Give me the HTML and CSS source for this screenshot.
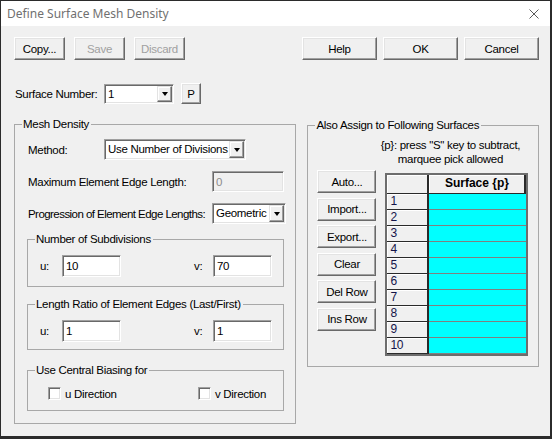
FILE: index.html
```html
<!DOCTYPE html>
<html lang="en">

<head>
    <meta charset="UTF-8">
    <title>Define Surface Mesh Density</title>
    <link rel="stylesheet" href="styles.css">
</head>

<body>
    <div class="window">
        <div class="titlebar">
            <span class="title">Define Surface Mesh Density</span>
            <svg class="close-icon" width="10" height="10" viewBox="0 0 10 10">
                <path d="M0.5 0.5L9.5 9.5M9.5 0.5L0.5 9.5" stroke="#5a5a5a" stroke-width="1" fill="none" />
            </svg>
        </div>

        <div class="dialog">
            <div class="toolbar">
                <div class="btn-group">
                    <button class="btn">Copy...</button>
                    <button class="btn" disabled>Save</button>
                    <button class="btn" disabled>Discard</button>
                </div>
                <div class="btn-group right">
                    <button class="btn wide">Help</button>
                    <button class="btn wide">OK</button>
                    <button class="btn wide">Cancel</button>
                </div>
            </div>

            <div class="surface-row">
                <span class="surface-label">Surface Number:</span>
                <div class="combo surface-combo">
                    <span class="combo-text">1</span>
                    <span class="combo-arrow"></span>
                </div>
                <button class="btn p-btn">P</button>
            </div>

            <div class="panels">
                <!-- Left: mesh density settings -->
                <fieldset class="group mesh">
                    <legend>Mesh Density</legend>
                    <div class="mesh-body">
                        <div class="field-row">
                            <span class="label method-label">Method:</span>
                            <div class="combo method-combo">
                                <span class="combo-text">Use Number of Divisions</span>
                                <span class="combo-arrow"></span>
                            </div>
                        </div>
                        <div class="field-row">
                            <span class="label long-label">Maximum Element Edge Length:</span>
                            <input class="edit max-edit" type="text" value="0" disabled>
                        </div>
                        <div class="field-row">
                            <span class="label long-label squeeze">Progression of Element Edge Lengths:</span>
                            <div class="combo prog-combo">
                                <span class="combo-text">Geometric</span>
                                <span class="combo-arrow"></span>
                            </div>
                        </div>

                        <fieldset class="group sub subdiv">
                            <legend>Number of Subdivisions</legend>
                            <div class="uv-row">
                                <span class="uv-label">u:</span>
                                <input class="edit uv-edit" type="text" value="10">
                                <span class="uv-label v-label">v:</span>
                                <input class="edit uv-edit" type="text" value="70">
                            </div>
                        </fieldset>

                        <fieldset class="group sub ratio">
                            <legend>Length Ratio of Element Edges (Last/First)</legend>
                            <div class="uv-row tight">
                                <span class="uv-label">u:</span>
                                <input class="edit uv-edit" type="text" value="1">
                                <span class="uv-label v-label">v:</span>
                                <input class="edit uv-edit" type="text" value="1">
                            </div>
                        </fieldset>

                        <fieldset class="group sub biasing">
                            <legend>Use Central Biasing for</legend>
                            <div class="check-row">
                                <label class="check first"><span class="check-box"></span>u Direction</label>
                                <label class="check"><span class="check-box"></span>v Direction</label>
                            </div>
                        </fieldset>
                    </div>
                </fieldset>

                <!-- Right: surface list -->
                <fieldset class="group assign">
                    <legend>Also Assign to Following Surfaces</legend>
                    <div class="note">{p}: press "S" key to subtract,<br>marquee pick allowed</div>
                    <div class="assign-body">
                        <div class="side-buttons">
                            <button class="btn side-btn">Auto...</button>
                            <button class="btn side-btn">Import...</button>
                            <button class="btn side-btn">Export...</button>
                            <button class="btn side-btn">Clear</button>
                            <button class="btn side-btn">Del Row</button>
                            <button class="btn side-btn">Ins Row</button>
                        </div>
                        <div class="grid">
                            <div class="cell head"></div>
                            <div class="cell head">Surface {p}</div>
                            <div class="cell num">1</div><div class="cell val"></div>
                            <div class="cell num">2</div><div class="cell val"></div>
                            <div class="cell num">3</div><div class="cell val"></div>
                            <div class="cell num">4</div><div class="cell val"></div>
                            <div class="cell num">5</div><div class="cell val"></div>
                            <div class="cell num">6</div><div class="cell val"></div>
                            <div class="cell num">7</div><div class="cell val"></div>
                            <div class="cell num">8</div><div class="cell val"></div>
                            <div class="cell num">9</div><div class="cell val"></div>
                            <div class="cell num">10</div><div class="cell val"></div>
                        </div>
                    </div>
                </fieldset>
            </div>
        </div>
    </div>
</body>

</html>
```

FILE: styles.css
```css
* {
    box-sizing: border-box;
}

body {
    margin: 0;
    background-color: #f0f0f0;
    font-family: "Liberation Sans", Arial, sans-serif;
    font-size: 11.5px;
    letter-spacing: -0.3px;
    color: #000;
}

/* Window frame */
.window {
    width: 552px;
    height: 439px;
    border: 1px solid #2b2b2b;
    border-right-width: 2px;
    border-bottom-width: 3px;
    background-color: #f0f0f0;
    display: flex;
    flex-direction: column;
}

.titlebar {
    height: 25px;
    background-color: #fff;
    display: flex;
    align-items: center;
    justify-content: space-between;
    padding: 0 11px 0 6px;
}

.title {
    font-family: "Noto Sans", sans-serif;
    font-size: 12px;
    letter-spacing: 0;
    color: #707070;
}

.close-icon {
    margin-top: 1px;
}

.dialog {
    padding: 11px 11px 0 13px;
}

/* Buttons */
.btn {
    width: 51px;
    height: 23px;
    padding: 0;
    font: inherit;
    letter-spacing: inherit;
    color: #000;
    background-color: #f0f0f0;
    border: 1px solid;
    border-color: #fff #696969 #696969 #fff;
    box-shadow: inset -1px -1px 0 #a0a0a0, inset 1px 1px 0 #e3e3e3;
    white-space: nowrap;
}

.btn:disabled {
    color: #a0a0a0;
}

.btn.wide {
    width: 75px;
}

.toolbar {
    display: flex;
    justify-content: space-between;
}

.btn-group {
    display: flex;
    gap: 9px;
}

.btn-group.right {
    gap: 6px;
}

/* Surface number row */
.surface-row {
    display: flex;
    align-items: center;
    margin-top: 23px;
    height: 21px;
}

.surface-label {
    width: 90px;
    padding-left: 1px;
}

.p-btn {
    width: 20px;
    height: 21px;
    margin-left: 7px;
}

/* Combo boxes and edits share the sunken look */
.combo,
.edit {
    height: 21px;
    background-color: #fff;
    border: 1px solid;
    border-color: #a0a0a0 #fff #fff #a0a0a0;
    box-shadow: inset 1px 1px 0 #696969, inset -1px -1px 0 #e3e3e3;
}

.combo {
    display: flex;
    align-items: stretch;
    padding: 1px;
}

.combo-text {
    flex: 1;
    padding-left: 2px;
    line-height: 17px;
    white-space: nowrap;
    overflow: hidden;
}

.combo-arrow {
    width: 15px;
    display: flex;
    align-items: center;
    justify-content: center;
    background-color: #f0f0f0;
    border: 1px solid;
    border-color: #e3e3e3 #696969 #696969 #e3e3e3;
    box-shadow: inset -1px -1px 0 #a0a0a0, inset 1px 1px 0 #fff;
}

.combo-arrow::after {
    content: "";
    border-top: 4px solid #000;
    border-left: 3.5px solid transparent;
    border-right: 3.5px solid transparent;
    margin-top: 1px;
}

.surface-combo {
    width: 70px;
    height: 20px;
}

.edit {
    font: inherit;
    letter-spacing: inherit;
    color: #000;
    padding: 0 0 0 3px;
    outline: none;
}

.edit:disabled {
    background-color: #f0f0f0;
    color: #8c8c8c;
}

/* Group boxes */
.panels {
    display: flex;
    align-items: flex-start;
    gap: 11px;
    margin-top: 13px;
}

.group {
    margin: 0;
    padding: 0;
    min-width: 0;
    border: 1px solid #a8a8a8;
}

.group legend {
    margin-left: 7px;
    padding: 0 2px 0 1px;
    line-height: 14px;
    white-space: nowrap;
}

.mesh {
    width: 283px;
    height: 307px;
}

.mesh-body {
    padding: 8px 0 0 12px;
}

.field-row {
    display: flex;
    align-items: center;
    height: 21px;
}

.field-row + .field-row {
    margin-top: 11px;
}

.label {
    white-space: nowrap;
    padding-left: 1px;
    flex-shrink: 0;
}

.method-label {
    width: 77px;
}

.long-label {
    width: 185px;
}

.squeeze {
    letter-spacing: -0.55px;
}

.method-combo {
    width: 142px;
}

.max-edit {
    width: 72px;
}

.prog-combo {
    width: 74px;
}

.sub {
    width: 257px;
}

.subdiv {
    margin-top: 8px;
}

.ratio {
    margin-top: 10px;
}

.biasing {
    margin-top: 13px;
}

.uv-row {
    display: flex;
    align-items: center;
    padding: 9px 0 9px 12px;
}

.uv-row.tight {
    padding-bottom: 7px;
}

.uv-label {
    width: 22px;
}

.v-label {
    margin-left: 73px;
    width: 19px;
}

.uv-edit {
    width: 59px;
    height: 22px;
}

.check-row {
    display: flex;
    align-items: center;
    height: 15px;
    margin: 9px 0;
    padding-left: 20px;
}

.check {
    display: flex;
    align-items: center;
    gap: 4px;
    white-space: nowrap;
}

.check.first {
    width: 150px;
}

.check-box {
    width: 13px;
    height: 13px;
    background-color: #fff;
    border: 1px solid;
    border-color: #a0a0a0 #fff #fff #a0a0a0;
    box-shadow: inset 1px 1px 0 #696969, inset -1px -1px 0 #e3e3e3;
}

/* Right side */
.assign {
    width: 232px;
    height: 249px;
    margin-top: 1px;
}

.note {
    width: 162px;
    margin: 6px 0 0 61px;
    text-align: center;
    line-height: 14px;
    white-space: nowrap;
}

.assign-body {
    display: flex;
    align-items: flex-start;
    padding-left: 9px;
}

.side-buttons {
    display: flex;
    flex-direction: column;
    gap: 4.6px;
    margin-top: 4px;
}

.side-btn {
    width: 59px;
}

.grid {
    display: grid;
    grid-template-columns: 42px 97px;
    grid-template-rows: 19px;
    grid-auto-rows: 16px;
    margin: 7px 0 0 9px;
    border: 2px solid #6d6d6d;
    background-color: #f0f0f0;
}

.cell {
    font-size: 12px;
    line-height: 14px;
}

.head,
.num {
    background-color: #f0f0f0;
    border-right: 2px solid #2a2a2a;
    border-bottom: 1px solid #2a2a2a;
    box-shadow: inset 1px 1px 0 #fff;
}

.head {
    font-weight: bold;
    text-align: center;
    line-height: 17px;
    letter-spacing: 0;
}

.num {
    padding-left: 3px;
    color: #14144a;
}

.val {
    background-color: #00ffff;
    border-bottom: 1px solid #808080;
}
```
